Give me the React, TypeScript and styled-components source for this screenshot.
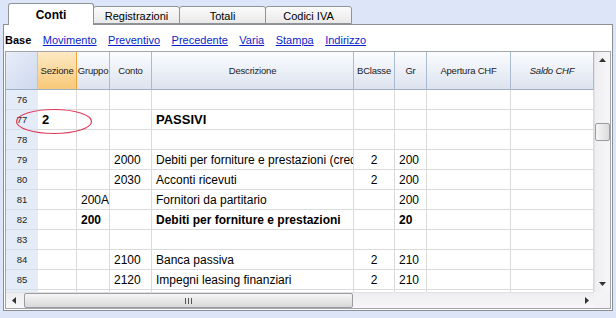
import styled, { createGlobalStyle } from "styled-components";

const GlobalStyle = createGlobalStyle`
  html, body {
    margin: 0;
    padding: 0;
    background: #dce6f8;
    font-family: "Liberation Sans", Arial, sans-serif;
  }
`;

const Page = styled.div`
  width: 616px;
  height: 318px;
  padding-left: 3px;
  box-sizing: border-box;
`;

const TabBar = styled.div`
  display: flex;
  align-items: flex-end;
  height: 24px;
  padding-left: 5px;
`;

const Tab = styled.div<{ $active?: boolean }>`
  box-sizing: border-box;
  width: ${({ $active }) => ($active ? "86px" : "87px")};
  margin-right: -1px;
  height: ${({ $active }) => ($active ? "22px" : "18px")};
  margin-bottom: ${({ $active }) => ($active ? "-1px" : "0")};
  position: relative;
  z-index: ${({ $active }) => ($active ? 2 : 1)};
  display: flex;
  align-items: center;
  justify-content: center;
  border: 1px solid #8f9499;
  border-bottom: ${({ $active }) => ($active ? "none" : "1px solid #8f9499")};
  border-radius: 3px 3px 0 0;
  background: ${({ $active }) =>
    $active
      ? "linear-gradient(#ffffff, #ffffff)"
      : "linear-gradient(#fbfbfb, #e9e9e9)"};
  font-size: ${({ $active }) => ($active ? "12px" : "11px")};
  font-weight: ${({ $active }) => ($active ? 700 : 400)};
  color: #000;
  padding-top: ${({ $active }) => ($active ? "0" : "1px")};
`;

const Panel = styled.div`
  position: relative;
  z-index: 1;
  box-sizing: border-box;
  width: 610px;
  height: 287px;
  border: 1px solid #8c8f94;
  background: #fff;
  display: flex;
  flex-direction: column;
`;

const LinkBar = styled.div`
  height: 26px;
  box-sizing: border-box;
  padding: 8px 0 0 1px;
  display: flex;
  align-items: flex-start;
  gap: 11.5px;
  font-size: 11px;
  line-height: 14px;
`;

const BaseLabel = styled.span`
  font-weight: 700;
  color: #000;
`;

const NavLink = styled.a`
  color: #0a1ecc;
  text-decoration: underline;
  cursor: pointer;
`;

const GridFrame = styled.div`
  margin: 0 1px;
  border: 1px solid #a2a5aa;
  display: flex;
  flex-direction: column;
`;

const GridMain = styled.div`
  position: relative;
  display: flex;
  height: 240px;
`;

const Table = styled.div`
  width: 588px;
  height: 240px;
  overflow: hidden;
  display: grid;
  grid-template-columns: 32px 39px 33px 42px 202px 41px 32px 84px 83px;
  grid-auto-rows: 20px;
  grid-template-rows: 38px;
`;

const HeaderCell = styled.div<{ $selected?: boolean; $italic?: boolean }>`
  box-sizing: border-box;
  display: flex;
  align-items: center;
  justify-content: center;
  font-size: 9.5px;
  letter-spacing: -0.2px;
  color: #1a1a1a;
  white-space: nowrap;
  overflow: hidden;
  font-style: ${({ $italic }) => ($italic ? "italic" : "normal")};
  border-right: 1px solid
    ${({ $selected }) => ($selected ? "#f2a33a" : "#a9bbd0")};
  border-bottom: 1px solid #9fb0c6;
  background: ${({ $selected }) =>
    $selected
      ? "linear-gradient(#fde9c4, #f8c979)"
      : "linear-gradient(#fbfcfe, #dce3ef)"};
`;

const Corner = styled.div`
  box-sizing: border-box;
  border-right: 1px solid #b9c7da;
  border-bottom: 1px solid #9fb0c6;
  background: linear-gradient(135deg, #e9eef8, #cdd9ee);
`;

const RowNum = styled.div`
  box-sizing: border-box;
  display: flex;
  align-items: center;
  justify-content: center;
  background: #e4ecf8;
  border-bottom: 1px solid #d5dfec;
  font-size: 9.5px;
  color: #222;
`;

const Cell = styled.div<{
  $bold?: boolean;
  $big?: boolean;
  $center?: boolean;
}>`
  box-sizing: border-box;
  display: flex;
  align-items: center;
  justify-content: ${({ $center }) => ($center ? "center" : "flex-start")};
  padding: ${({ $center }) => ($center ? "0" : "0 0 0 4px")};
  border-right: 1px solid #dadada;
  border-bottom: 1px solid #dadada;
  font-size: ${({ $big }) => ($big ? "13px" : "12px")};
  font-weight: ${({ $bold }) => ($bold ? 700 : 400)};
  color: #000;
  white-space: nowrap;
  overflow: hidden;
`;

const VScroll = styled.div`
  width: 16px;
  height: 240px;
  box-sizing: border-box;
  background: linear-gradient(90deg, #eeeef0, #f7f7f9);
  border-left: 1px solid #e2e2e6;
  display: flex;
  flex-direction: column;
  align-items: center;
`;

const ArrowBox = styled.div`
  width: 15px;
  height: 16px;
  display: flex;
  align-items: center;
  justify-content: center;
`;

const VThumb = styled.div`
  box-sizing: border-box;
  width: 15px;
  height: 18px;
  margin-top: 55px;
  border: 1px solid #9a9ca0;
  border-radius: 2px;
  background: linear-gradient(90deg, #f6f6f6, #dcdcdc);
`;

const Spacer = styled.div`
  flex: 1;
`;

const HScrollRow = styled.div`
  display: flex;
  height: 16px;
`;

const HScroll = styled.div`
  width: 588px;
  height: 16px;
  box-sizing: border-box;
  background: linear-gradient(#eeeef0, #f7f7f9);
  border-top: 1px solid #e2e2e6;
  display: flex;
  align-items: center;
`;

const HThumb = styled.div`
  box-sizing: border-box;
  width: 329px;
  height: 15px;
  margin-left: 3px;
  border: 1px solid #9a9ca0;
  border-radius: 2px;
  background: linear-gradient(#f6f6f6, #d8d8d8);
  display: flex;
  align-items: center;
  justify-content: center;
  gap: 2px;
`;

const Grip = styled.span`
  width: 1px;
  height: 6px;
  background: #555;
`;

const ScrollCorner = styled.div`
  width: 16px;
  height: 16px;
  background: #f3f3f5;
`;

const Ring = styled.svg`
  position: absolute;
  left: 9px;
  top: 56px;
  pointer-events: none;
`;

type Row = {
  n?: number;
  sez?: string;
  grp?: string;
  conto?: string;
  desc?: string;
  bcl?: string;
  gr?: string;
  bold?: boolean;
  big?: boolean;
};

const rows: Row[] = [
  { n: 76 },
  { n: 77, sez: "2", desc: "PASSIVI", bold: true, big: true },
  { n: 78 },
  {
    n: 79,
    conto: "2000",
    desc: "Debiti per forniture e prestazioni (creditori)",
    bcl: "2",
    gr: "200",
  },
  { n: 80, conto: "2030", desc: "Acconti ricevuti", bcl: "2", gr: "200" },
  { n: 81, grp: "200A", desc: "Fornitori da partitario", gr: "200" },
  {
    n: 82,
    grp: "200",
    desc: "Debiti per forniture e prestazioni",
    gr: "20",
    bold: true,
  },
  { n: 83 },
  { n: 84, conto: "2100", desc: "Banca passiva", bcl: "2", gr: "210" },
  {
    n: 85,
    conto: "2120",
    desc: "Impegni leasing finanziari",
    bcl: "2",
    gr: "210",
  },
  {},
];

const tabs = ["Conti", "Registrazioni", "Totali", "Codici IVA"];
const links = [
  "Movimento",
  "Preventivo",
  "Precedente",
  "Varia",
  "Stampa",
  "Indirizzo",
];

function Triangle({ dir }: { dir: "up" | "down" | "left" | "right" }) {
  const pts = {
    up: "0,4 3.5,0 7,4",
    down: "0,0 7,0 3.5,4",
    left: "4,0 4,7 0,3.5",
    right: "0,0 0,7 4,3.5",
  }[dir];
  const vertical = dir === "up" || dir === "down";
  return (
    <svg width={vertical ? 7 : 4} height={vertical ? 4 : 7}>
      <polygon points={pts} fill="#333" />
    </svg>
  );
}

export default function App() {
  return (
    <Page>
      <GlobalStyle />
      <TabBar>
        {tabs.map((t, i) => (
          <Tab key={t} $active={i === 0}>
            {t}
          </Tab>
        ))}
      </TabBar>
      <Panel>
        <LinkBar>
          <BaseLabel>Base</BaseLabel>
          {links.map((l) => (
            <NavLink key={l}>{l}</NavLink>
          ))}
        </LinkBar>
        <GridFrame>
          <GridMain>
            <Table>
              <Corner />
              <HeaderCell $selected>Sezione</HeaderCell>
              <HeaderCell>Gruppo</HeaderCell>
              <HeaderCell>Conto</HeaderCell>
              <HeaderCell>Descrizione</HeaderCell>
              <HeaderCell>BClasse</HeaderCell>
              <HeaderCell>Gr</HeaderCell>
              <HeaderCell>Apertura CHF</HeaderCell>
              <HeaderCell $italic>Saldo CHF</HeaderCell>
              {rows.map((r, i) => (
                <Row key={i} row={r} />
              ))}
            </Table>
            <VScroll>
              <ArrowBox>
                <Triangle dir="up" />
              </ArrowBox>
              <VThumb />
              <Spacer />
              <ArrowBox>
                <Triangle dir="down" />
              </ArrowBox>
            </VScroll>
            <Ring width="78" height="27" viewBox="0 0 78 27">
              <ellipse
                cx="39"
                cy="13.5"
                rx="37.5"
                ry="12"
                fill="none"
                stroke="#e23a5c"
                strokeWidth="1.2"
              />
            </Ring>
          </GridMain>
          <HScrollRow>
            <HScroll>
              <ArrowBox>
                <Triangle dir="left" />
              </ArrowBox>
              <HThumb>
                <Grip />
                <Grip />
                <Grip />
              </HThumb>
              <Spacer />
              <ArrowBox>
                <Triangle dir="right" />
              </ArrowBox>
            </HScroll>
            <ScrollCorner />
          </HScrollRow>
        </GridFrame>
      </Panel>
    </Page>
  );
}

function Row({ row }: { row: Row }) {
  const b = row.bold;
  return (
    <>
      <RowNum>{row.n}</RowNum>
      <Cell $bold={b} $big={row.big}>
        {row.sez}
      </Cell>
      <Cell $bold={b}>{row.grp}</Cell>
      <Cell $bold={b}>{row.conto}</Cell>
      <Cell $bold={b} $big={row.big}>
        {row.desc}
      </Cell>
      <Cell $bold={b} $center>
        {row.bcl}
      </Cell>
      <Cell $bold={b}>{row.gr}</Cell>
      <Cell />
      <Cell />
    </>
  );
}
